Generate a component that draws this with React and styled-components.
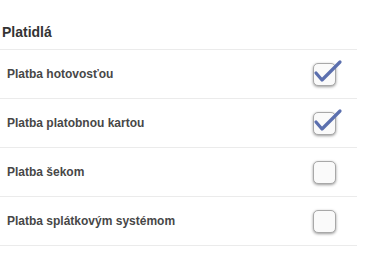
import React from "react";
import styled, { createGlobalStyle } from "styled-components";

const Global = createGlobalStyle`
  html, body { margin: 0; padding: 0; background: #fff; }
  body { font-family: "Liberation Sans", Arial, sans-serif; }
`;

const Panel = styled.div`
  width: 357px;
`;

const Heading = styled.h3`
  margin: 0;
  padding: 24px 0 8px 2px;
  height: 17px;
  font-size: 14px;
  line-height: 17px;
  font-weight: bold;
  color: #333;
  border-bottom: 1px solid #ebebeb;
`;

const Row = styled.label`
  display: flex;
  align-items: center;
  justify-content: space-between;
  height: 48px;
  padding: 0 21px 0 7px;
  border-bottom: 1px solid #ebebeb;
`;

const Label = styled.span`
  font-size: 12px;
  font-weight: bold;
  color: #474747;
`;

const Box = styled.span`
  position: relative;
  width: 21px;
  height: 21px;
  border-radius: 5px;
  background: #fafafa;
  border: 1px solid #a8a8a8;
  box-shadow: 0 1px 3px rgba(0, 0, 0, 0.4);
`;

const Mark = styled.svg`
  position: absolute;
  left: 0;
  top: -5px;
  overflow: visible;
`;

const items = [
  { label: "Platba hotovosťou", checked: true },
  { label: "Platba platobnou kartou", checked: true },
  { label: "Platba šekom", checked: false },
  { label: "Platba splátkovým systémom", checked: false },
];

function Check({ checked }) {
  return (
    <Box>
      {checked && (
        <Mark width="30" height="26" viewBox="0 0 30 26">
          <path
            d="M2 14 L8 21 L26 3"
            fill="none"
            stroke="#5b6fae"
            strokeWidth="3.2"
            strokeLinecap="round"
            strokeLinejoin="round"
          />
        </Mark>
      )}
    </Box>
  );
}

export default function App() {
  return (
    <>
      <Global />
      <Panel>
        <Heading>Platidlá</Heading>
        {items.map((it) => (
          <Row key={it.label}>
            <Label>{it.label}</Label>
            <Check checked={it.checked} />
          </Row>
        ))}
      </Panel>
    </>
  );
}
